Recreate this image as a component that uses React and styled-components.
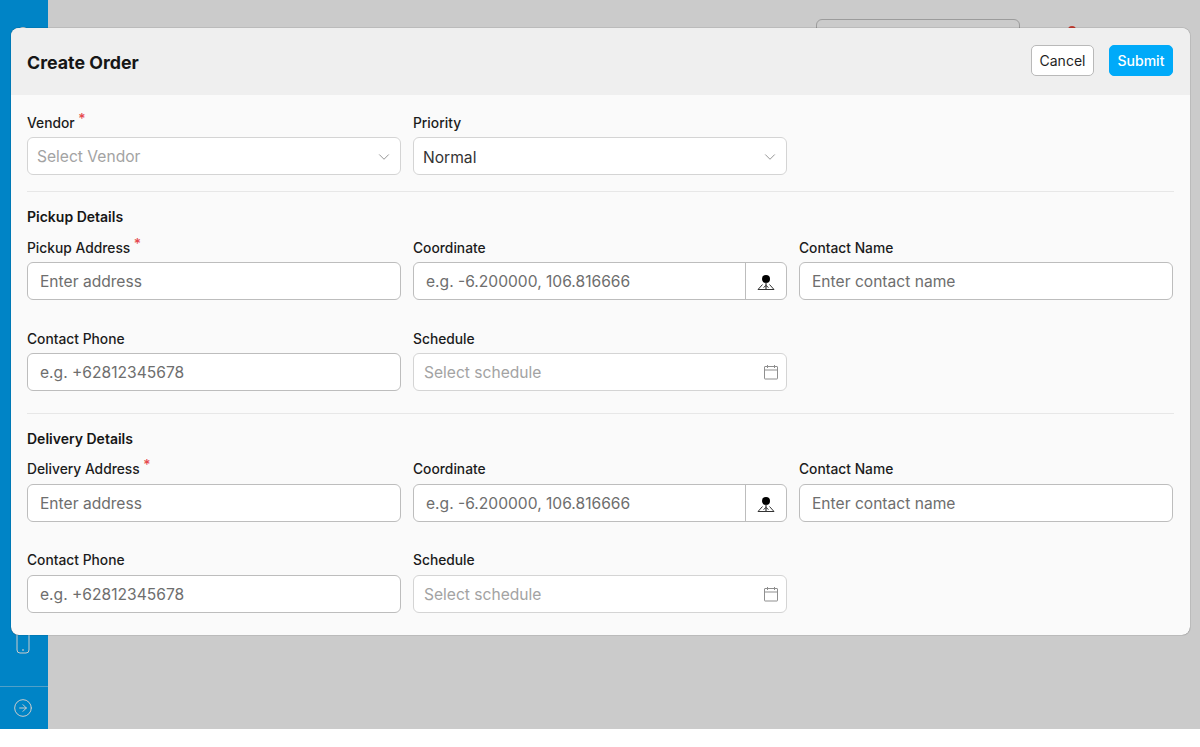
import React from "react";
import styled, { createGlobalStyle } from "styled-components";
import { ChevronDown, CircleArrowRight } from "lucide-react";

const Global = createGlobalStyle`
  html, body { margin: 0; padding: 0; background: #fff; }
  body { font-family: Inter, "Noto Sans", "Liberation Sans", sans-serif; }
  * { box-sizing: border-box; }
`;

const Page = styled.div`
  position: relative;
  display: flex;
  width: 1200px;
  height: 729px;
  overflow: hidden;
  background: #fefefe;
`;
const Sidebar = styled.aside`
  width: 48px;
  display: flex;
  flex-direction: column;
  background: #00a6f8;
  color: #fff;
`;
const SideNav = styled.nav`
  flex: 1;
  display: flex;
  flex-direction: column;
  justify-content: space-between;
  align-items: center;
  padding: 26px 2px 32px 0;
`;
const SideFoot = styled.div`
  height: 43px;
  display: flex;
  align-items: center;
  justify-content: center;
  border-top: 1px solid rgba(255, 255, 255, 0.4);
  padding-right: 3px;
`;
const Main = styled.main`
  flex: 1;
  display: flex;
  justify-content: flex-end;
  align-items: flex-start;
  gap: 48px;
  padding: 19px 124px 0 0;
`;
const SearchBox = styled.div`
  width: 204px;
  height: 36px;
  border: 1px solid #c4c4c4;
  border-radius: 6px;
`;
const Badge = styled.span`
  width: 8px;
  height: 8px;
  margin-top: 7px;
  border-radius: 50%;
  background: #f04a3c;
`;
const Overlay = styled.div`
  position: absolute;
  inset: 0;
  background: rgba(0, 0, 0, 0.2);
`;
const Modal = styled.section`
  position: absolute;
  left: 11px;
  top: 28px;
  width: 1179px;
  height: 607px;
  display: flex;
  flex-direction: column;
  background: #fafafa;
  border-radius: 8px;
  box-shadow: 0 0 1px 0 rgba(0, 0, 0, 0.8);
  overflow: hidden;
`;
const Header = styled.header`
  flex: none;
  height: 67px;
  padding: 0 17px 0 16px;
  display: flex;
  align-items: center;
  justify-content: space-between;
  background: #efefef;
`;
const Title = styled.h2`
  margin: 2px 0 0;
  font-size: 17.8px;
  line-height: 24px;
  font-weight: 700;
  color: #161616;
`;
const Actions = styled.div`
  display: flex;
  gap: 15px;
  margin-top: -3px;
`;
const Button = styled.button`
  height: 31px;
  padding: 0;
  width: ${(p) => (p.$primary ? "64px" : "63px")};
  border-radius: 5px;
  border: 1px solid ${(p) => (p.$primary ? "#00aaf9" : "#b9b9b9")};
  background: ${(p) => (p.$primary ? "#00aaf9" : "#fff")};
  color: ${(p) => (p.$primary ? "#fff" : "#1f1f1f")};
  font: ${(p) => (p.$primary ? 500 : 400)} 14px Inter, sans-serif;
`;
const Body = styled.div`
  padding: 15px 16px 0;
`;
const Grid = styled.div`
  display: grid;
  grid-template-columns: repeat(3, 374px);
  column-gap: 12px;
  row-gap: 26px;
`;
const Field = styled.div`
  display: flex;
  flex-direction: column;
`;
const Label = styled.label`
  height: 27px;
  display: flex;
  align-items: center;
  font-size: 13.8px;
  font-weight: 500;
  color: #1c1c1c;
  padding-bottom: ${(p) => (p.$lift ? 3 : 1)}px;
`;
const Req = styled.span`
  color: #e5484d;
  font-size: 14px;
  margin-left: 3.5px;
  position: relative;
  top: -5px;
`;
const Divider = styled.hr`
  margin: ${(p) => p.$top}px 0 0;
  height: 1px;
  border: 0;
  background: #e7e7e7;
`;
const SectionTitle = styled.h3`
  margin: 15px 0 8px;
  font-size: 14px;
  line-height: 20px;
  font-weight: 600;
  color: #161616;
`;
const Control = styled.div`
  height: 38px;
  display: flex;
  align-items: center;
  background: #fff;
  border: 1px solid ${(p) => (p.$soft ? "#d4d4d4" : "#bdbdbd")};
  border-radius: 6px;
  overflow: hidden;
`;
const Input = styled.input`
  flex: 1;
  min-width: 0;
  height: 100%;
  padding: 0 12px;
  border: 0;
  outline: 0;
  background: transparent;
  font: 400 15.6px Inter, sans-serif;
  &::placeholder { color: #6e6e6e; opacity: 1; }
`;
const SelectValue = styled.span`
  flex: 1;
  padding-left: ${(p) => p.$pad || 9}px;
  font-size: 15.6px;
  color: ${(p) => (p.$muted ? "#a3a3a3" : "#333")};
  position: relative;
  top: ${(p) => p.$shift || 0}px;
`;
const Trailing = styled.span`
  display: flex;
  padding-right: ${(p) => p.$pad}px;
  padding-top: ${(p) => p.$down || 0}px;
  color: ${(p) => p.$color};
`;
const Addon = styled.span`
  width: 41px;
  height: 100%;
  flex: none;
  display: flex;
  align-items: center;
  justify-content: center;
  border-left: 1px solid #bdbdbd;
`;

const PinIcon = () => (
  <svg width="18" height="20" viewBox="0 0 18 20" fill="none">
    <circle cx="9" cy="8" r="4" fill="#000" />
    <path d="M9 11v7" stroke="#333" strokeWidth="1.2" />
    <path d="M5.5 13.5 L1 18.5 H17 L12.5 13.5 M6.5 16.5 L9 14.5 L11.5 16.5" stroke="#333" strokeWidth="1" />
  </svg>
);
const CalendarIcon = () => (
  <svg width="16" height="16" viewBox="0 0 16 16" fill="none" stroke="#8f8f8f" strokeWidth="1">
    <rect x="1.5" y="2.5" width="13" height="12.5" rx="0.5" />
    <path d="M1.5 6h13M4.5 1v3M11.5 1v3" />
  </svg>
);
const PhoneIcon = () => (
  <svg width="14" height="24" viewBox="0 0 14 24" fill="none" stroke="#fff" strokeWidth="1">
    <rect x="1" y="1" width="12" height="22" rx="3" />
    <path d="M5 3h4" />
    <circle cx="7" cy="20" r="0.5" />
  </svg>
);
const TopIcon = () => (
  <svg width="14" height="14" viewBox="0 0 14 14" fill="none" stroke="#fff" strokeWidth="1">
    <circle cx="7" cy="7" r="5.5" />
  </svg>
);
const Chevron = () => (
  <Trailing $pad={7} $down={1} $color="#8a8a8a"><ChevronDown size={18} strokeWidth={1.2} /></Trailing>
);

const Text = ({ label, required, placeholder, lift }) => (
  <Field>
    <Label $lift={lift}>{label}{required && <Req>*</Req>}</Label>
    <Control><Input placeholder={placeholder} /></Control>
  </Field>
);

const Details = ({ title, prefix, lift }) => (
  <>
    <SectionTitle>{title}</SectionTitle>
    <Grid>
      <Text label={`${prefix} Address`} required placeholder="Enter address" lift={lift} />
      <Field>
        <Label $lift={lift}>Coordinate</Label>
        <Control>
          <Input placeholder="e.g. -6.200000, 106.816666" />
          <Addon><PinIcon /></Addon>
        </Control>
      </Field>
      <Text label="Contact Name" placeholder="Enter contact name" lift={lift} />
      <Text label="Contact Phone" placeholder="e.g. +62812345678" lift={lift} />
      <Field>
        <Label $lift={lift}>Schedule</Label>
        <Control $soft>
          <SelectValue $muted $pad={10}>Select schedule</SelectValue>
          <Trailing $pad={7} $color="#8f8f8f"><CalendarIcon /></Trailing>
        </Control>
      </Field>
    </Grid>
  </>
);

export default function App() {
  return (
    <>
      <Global />
      <Page>
        <Sidebar>
          <SideNav>
            <TopIcon />
            <PhoneIcon />
          </SideNav>
          <SideFoot><CircleArrowRight size={20} strokeWidth={1.2} color="#fff" /></SideFoot>
        </Sidebar>
        <Main>
          <SearchBox />
          <Badge />
        </Main>
        <Overlay />
        <Modal>
          <Header>
            <Title>Create Order</Title>
            <Actions>
              <Button>Cancel</Button>
              <Button $primary>Submit</Button>
            </Actions>
          </Header>
          <Body>
            <Grid>
              <Field>
                <Label>Vendor<Req>*</Req></Label>
                <Control $soft>
                  <SelectValue $muted>Select Vendor</SelectValue>
                  <Chevron />
                </Control>
              </Field>
              <Field>
                <Label>Priority</Label>
                <Control $soft>
                  <SelectValue $shift={1}>Normal</SelectValue>
                  <Chevron />
                </Control>
              </Field>
            </Grid>
            <Divider $top={16} />
            <Details title="Pickup Details" prefix="Pickup" />
            <Divider $top={22} />
            <Details title="Delivery Details" prefix="Delivery" lift />
          </Body>
        </Modal>
      </Page>
    </>
  );
}
